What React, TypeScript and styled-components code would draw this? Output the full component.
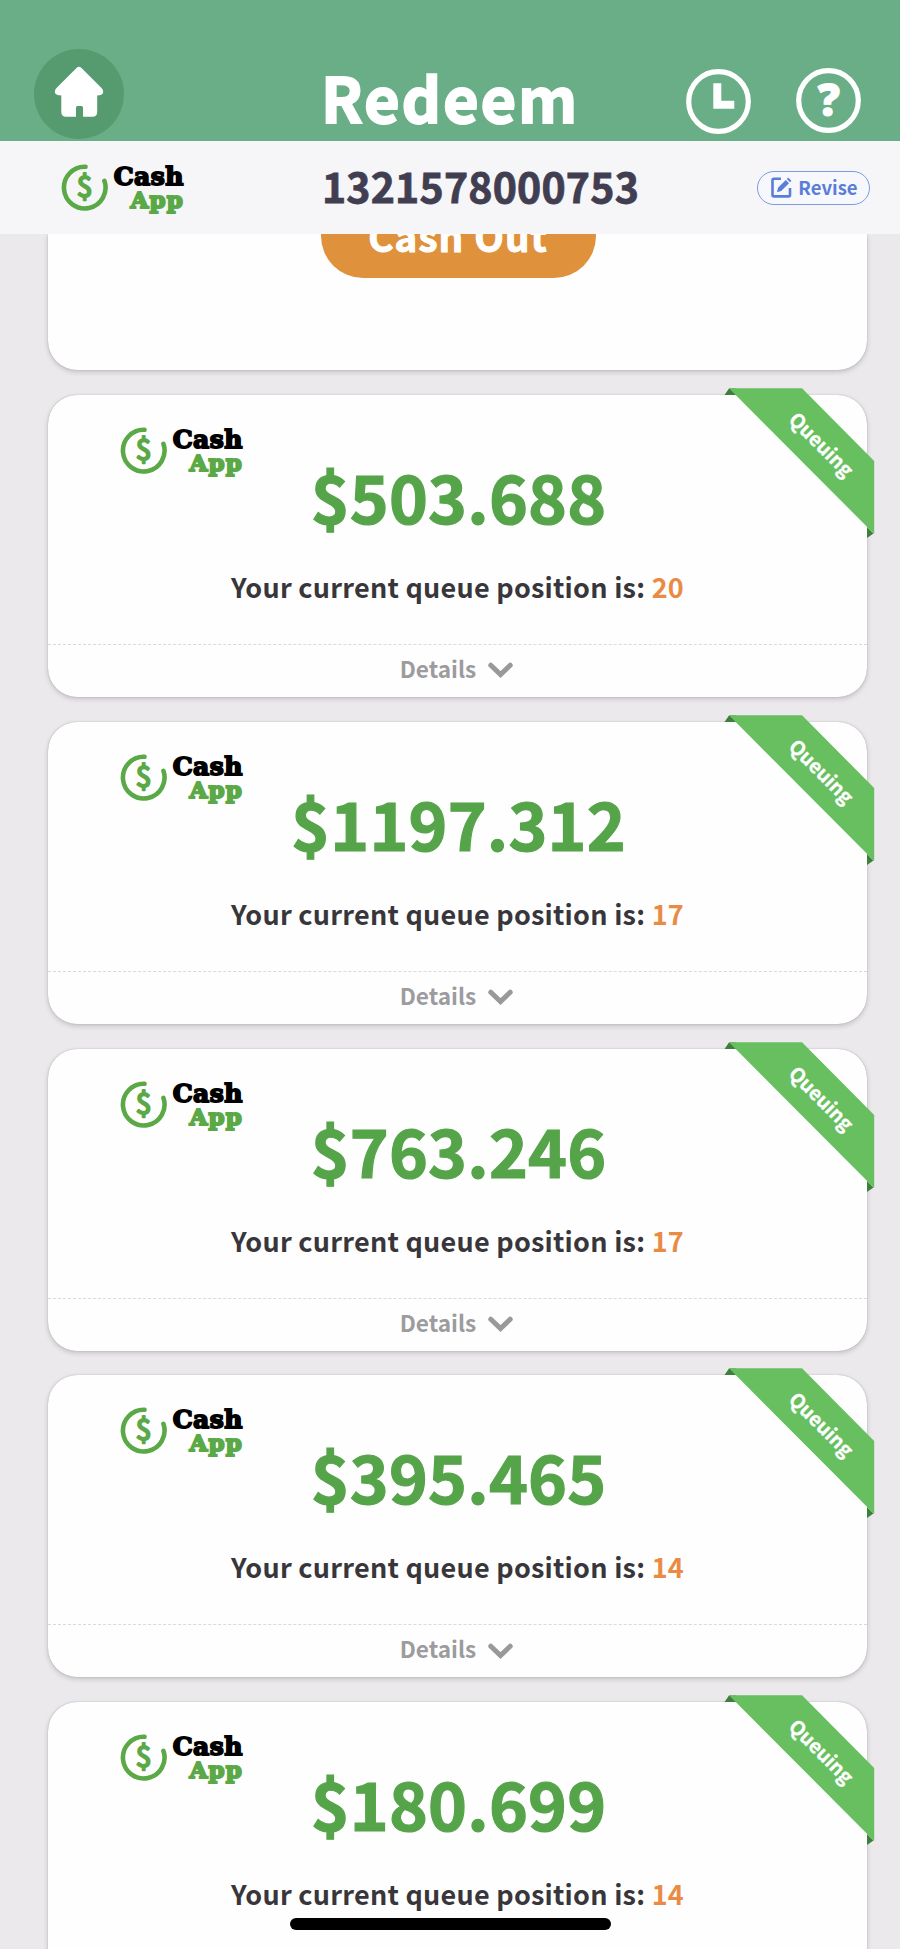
import React from "react";
import styled, { createGlobalStyle } from "styled-components";

const GlobalStyle = createGlobalStyle`
  * { box-sizing: border-box; }
  body {
    margin: 0;
    background: #ebe9ec;
    font-family: "Noto Sans CJK SC", "Noto Sans", sans-serif;
    font-weight: 700;
  }
`;

const Screen = styled.div`
  position: relative;
  display: flex;
  flex-direction: column;
  width: 900px;
  height: 1949px;
  overflow: hidden;
  background: #ebe9ec;
`;

const Header = styled.header`
  flex: none;
  display: grid;
  grid-template-columns: 1fr auto 1fr;
  align-items: start;
  height: 141px;
  padding: 0 34px;
  background: #69ae86;
`;

const HomeButton = styled.button`
  display: block;
  width: 90px;
  height: 90px;
  margin: 49px 0 0;
  padding: 0;
  border: 0;
  border-radius: 50%;
  background: #569a70;
`;

const Title = styled.h1`
  margin: 57px 0 0;
  color: #fff;
  font-size: 61.5px;
  line-height: 80px;
  letter-spacing: 1.8px;
  -webkit-text-stroke: 1.8px #fff;
`;

const HeaderActions = styled.div`
  display: flex;
  justify-content: flex-end;
  align-items: flex-start;
  gap: 45px;
  padding-right: 5px;
`;

const RoundIcon = styled.button<{ $top: number }>`
  width: 65px;
  height: 65px;
  margin: ${(p) => p.$top}px 0 0;
  padding: 0;
  border: 0;
  background: none;
  svg { display: block; }
`;

const AccountBar = styled.section`
  flex: none;
  display: flex;
  align-items: center;
  height: 93px;
  padding: 0 30px 0 61px;
  background: #f6f5f8;
`;

const AccountNumber = styled.div`
  flex: 1;
  padding: 0 0 6px 20px;
  text-align: center;
  color: #413e51;
  font-size: 41px;
  line-height: 50px;
  letter-spacing: 0.2px;
  -webkit-text-stroke: 0.8px #413e51;
`;

const ReviseButton = styled.button`
  display: flex;
  align-items: center;
  justify-content: center;
  gap: 6px;
  width: 113px;
  height: 34px;
  padding: 0 0 0 2px;
  border: 1.5px solid #7f9add;
  border-radius: 17px;
  background: #f6f8fe;
  color: #5a7dd6;
  font: 700 18.5px/30px "Noto Sans CJK SC", sans-serif;
  span { margin-top: -2px; }
`;

const LogoRow = styled.div`
  display: flex;
  width: 123px;
  height: 47px;
  svg { flex: none; display: block; }
`;

const Wordmark = styled.div`
  display: flex;
  flex-direction: column;
  align-items: flex-end;
  width: 76px;
  font-family: "DejaVu Serif", serif;
  font-weight: 700;
`;

const CashWord = styled.span`
  color: #000;
  font-size: 25px;
  line-height: 26px;
  letter-spacing: 0.5px;
  -webkit-text-stroke: 1.8px #000;
`;

const AppWord = styled.span`
  color: #5aa946;
  font-size: 23px;
  line-height: 19px;
  letter-spacing: 1.2px;
  -webkit-text-stroke: 2px #5aa946;
`;

const List = styled.main`
  flex: 1;
  min-height: 0;
  overflow: hidden;
  display: flex;
  flex-direction: column;
  gap: 24.8px;
  padding: 0 33px 0 48px;
`;

const Card = styled.article`
  position: relative;
  flex: none;
  display: flex;
  flex-direction: column;
  width: 819px;
  height: 302px;
  padding-top: 32px;
  border-radius: 29px;
  background: #fefefe;
  box-shadow: 0 2px 5px rgba(60, 50, 65, 0.22), 0 0 1px rgba(60, 50, 65, 0.45);
`;

const CashOutCard = styled(Card)`
  align-items: center;
  height: 136.2px;
  padding-top: 0;
  border-radius: 0 0 29px 29px;
`;

const CashOutButton = styled.button`
  width: 275px;
  height: 84px;
  margin: -40px 0 0 1px;
  padding: 0 0 3px;
  border: 0;
  border-radius: 42px;
  background: #df923b;
  color: #fff;
  font: 700 38.5px/60px "Noto Sans CJK SC", sans-serif;
  letter-spacing: 1.1px;
  -webkit-text-stroke: 1px #fff;
`;

const CardLogo = styled.div`
  height: 47px;
  margin-left: 72px;
`;

const Amount = styled.div`
  margin-top: -12px;
  padding-left: 2px;
  text-align: center;
  color: #56a44a;
  font-size: 66px;
  line-height: 66px;
  letter-spacing: 0.2px;
  -webkit-text-stroke: 1.2px #56a44a;
`;

const Queue = styled.div`
  margin-top: 39px;
  padding-bottom: 1px;
  text-align: center;
  color: #38363b;
  font-size: 27px;
  font-weight: 700;
  line-height: 40px;
  letter-spacing: 0.25px;
  b { color: #e98b45; font-weight: inherit; }
`;

const Details = styled.button`
  display: flex;
  align-items: center;
  justify-content: center;
  gap: 12px;
  height: 53px;
  margin: auto 0 0;
  padding: 0 2px 0 0;
  border: 0;
  border-top: 1px dashed #dbd9dd;
  background: none;
  color: #9c9b9e;
  font: 700 22.6px/40px "Noto Sans CJK SC", sans-serif;
  span { margin-top: -4px; }
`;

const Ribbon = styled.div`
  position: absolute;
  top: -7px;
  right: -8px;
  width: 151px;
  height: 151px;
  svg { display: block; }
`;

const RibbonLabel = styled.span`
  position: absolute;
  left: 38px;
  top: 41px;
  width: 120px;
  text-align: center;
  color: #fff;
  font-size: 19.5px;
  line-height: 30px;
  -webkit-text-stroke: 0.3px #fff;
  transform: rotate(45deg);
`;

const HomeIndicator = styled.div`
  position: absolute;
  left: 290px;
  bottom: 19px;
  width: 321px;
  height: 12px;
  border-radius: 6px;
  background: #000;
`;

function Logo() {
  return (
    <LogoRow>
      <svg width="47" height="47" viewBox="0 0 47 47">
        <path
          d="M24.5 2.8 A20.8 20.8 0 1 0 43.4 16.8"
          fill="none"
          stroke="#5aa946"
          strokeWidth="4.6"
          strokeLinecap="round"
        />
        <text
          x="23.6"
          y="33.4"
          textAnchor="middle"
          fontSize="28"
          fontWeight="400"
          fill="#5aa946"
          stroke="#5aa946"
          strokeWidth="2"
          strokeLinejoin="round"
        >
          $
        </text>
      </svg>
      <Wordmark>
        <CashWord>Cash</CashWord>
        <AppWord>App</AppWord>
      </Wordmark>
    </LogoRow>
  );
}

function HomeIcon() {
  return (
    <svg width="90" height="90" viewBox="0 0 90 90">
      <path
        d="M42.5 19 Q45 16.5 47.5 19 L68 39.5 Q72 46 63.2 46.5 V63 Q63.2 67.7 58.5 67.7 H49 V58.5 Q49 57 47.5 57 H43.5 Q42 57 42 58.5 V67.7 H32 Q27.3 67.7 27.3 63 V46.5 Q18 46 22 39.5 Z"
        fill="#fff"
      />
    </svg>
  );
}

function ClockIcon() {
  return (
    <svg width="65" height="65" viewBox="0 0 65 65">
      <circle cx="32.5" cy="32.5" r="29.8" fill="none" stroke="#fff" strokeWidth="5.2" />
      <path d="M27.3 14.3 H35.3 V31.7 H48.3 V39.7 H27.3 Z" fill="#fff" />
    </svg>
  );
}

function HelpIcon() {
  return (
    <svg width="65" height="65" viewBox="0 0 65 65">
      <circle cx="32.5" cy="32.5" r="29.8" fill="none" stroke="#fff" strokeWidth="5.2" />
      <text
        x="32.8"
        y="48"
        textAnchor="middle"
        fontFamily="Open Sans, sans-serif"
        fontWeight="800"
        fontSize="44"
        fill="#fff"
        stroke="#fff"
        strokeWidth="1"
      >
        ?
      </text>
    </svg>
  );
}

function EditIcon() {
  return (
    <svg width="21" height="21" viewBox="0 0 21 21">
      <path
        d="M10 1.8 H3 Q1.5 1.8 1.5 3.3 V18 Q1.5 19.4 3 19.4 H17.6 Q19 19.4 19 18 V11"
        fill="none"
        stroke="#5a7dd6"
        strokeWidth="2.6"
      />
      <path d="M6 15.2 L7 10.8 L14.8 3 L18 6.2 L10.2 14 Z M15.8 2 L17.2 0.6 L20.4 3.8 L19 5.2 Z" fill="#5a7dd6" />
    </svg>
  );
}

function Chevron() {
  return (
    <svg width="25" height="17" viewBox="0 0 25 17">
      <path
        d="M2.8 3.2 L12.5 12.6 L22.2 3.2"
        fill="none"
        stroke="#99989b"
        strokeWidth="5"
        strokeLinecap="round"
      />
    </svg>
  );
}

function QueueRibbon() {
  return (
    <Ribbon>
      <svg width="151" height="151" viewBox="0 0 151 151">
        <path d="M0.5 7 L5 0.5 H12 V7 Z M143 139 L149.5 145.5 L143 150 Z" fill="#3f7f3c" />
        <path d="M5 0.3 H78 L150.2 73 V146 Z" fill="#67bf60" />
      </svg>
      <RibbonLabel>Queuing</RibbonLabel>
    </Ribbon>
  );
}

const redemptions = [
  { amount: "$503.688", position: 20 },
  { amount: "$1197.312", position: 17 },
  { amount: "$763.246", position: 17 },
  { amount: "$395.465", position: 14 },
  { amount: "$180.699", position: 14 },
];

export default function App() {
  return (
    <>
      <GlobalStyle />
      <Screen>
        <Header>
          <HomeButton aria-label="Home">
            <HomeIcon />
          </HomeButton>
          <Title>Redeem</Title>
          <HeaderActions>
            <RoundIcon $top={69} aria-label="History">
              <ClockIcon />
            </RoundIcon>
            <RoundIcon $top={68} aria-label="Help">
              <HelpIcon />
            </RoundIcon>
          </HeaderActions>
        </Header>
        <AccountBar>
          <Logo />
          <AccountNumber>1321578000753</AccountNumber>
          <ReviseButton>
            <EditIcon />
            <span>Revise</span>
          </ReviseButton>
        </AccountBar>
        <List>
          <CashOutCard>
            <CashOutButton>Cash Out</CashOutButton>
          </CashOutCard>
          {redemptions.map((item) => (
            <Card key={item.amount}>
              <CardLogo>
                <Logo />
              </CardLogo>
              <Amount>{item.amount}</Amount>
              <Queue>
                Your current queue position is: <b>{item.position}</b>
              </Queue>
              <Details>
                <span>Details</span>
                <Chevron />
              </Details>
              <QueueRibbon />
            </Card>
          ))}
        </List>
        <HomeIndicator />
      </Screen>
    </>
  );
}
